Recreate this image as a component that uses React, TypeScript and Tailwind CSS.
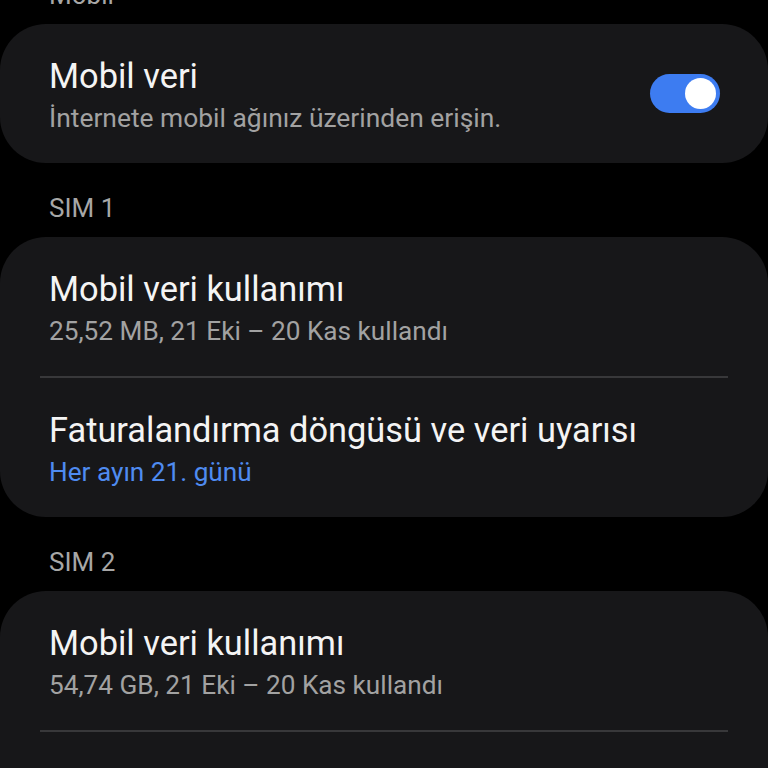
import React from 'react';

const font = { fontFamily: 'Roboto, "Noto Sans", sans-serif' };

const Header = ({ label }: { label: string }) => (
    <div className="flex h-[74px] items-end pb-[16px] pl-[49px] text-[26px] leading-none text-[#a7a7a7]">
        {label}
    </div>
);

const Row = ({ title, sub, blue }: { title: string; sub: string; blue?: boolean }) => (
    <div className="flex h-[139px] flex-col justify-center pl-[49px] pr-[40px] pt-[2px]">
        <div className="text-[34.4px] leading-[40px] text-[#f4f4f4]">{title}</div>
        <div className={`mt-[7px] text-[26.2px] leading-[30px] ${blue ? 'text-[#4f8bf0]' : 'text-[#a2a2a2]'}`}>
            {sub}
        </div>
    </div>
);

const Divider = () => <div className="mx-[40px] h-[2px] bg-[#38383a]" />;

export default function App() {
    return (
        <div className="h-[768px] w-[768px] overflow-hidden bg-black" style={font}>
            <div className="-mt-[50px]">
                <Header label="Mobil" />
                <div className="flex h-[139px] items-center justify-between rounded-[46px] bg-[#171719] pl-[49px] pr-[48px]">
                    <div className="pt-[2px]">
                        <div className="text-[34.4px] leading-[40px] text-[#f4f4f4]">Mobil veri</div>
                        <div className="mt-[7px] text-[26.4px] leading-[30px] text-[#a2a2a2]">
                            İnternete mobil ağınız üzerinden erişin.
                        </div>
                    </div>
                    <div className="flex h-[39px] w-[70px] items-center justify-end rounded-full bg-[#3d7cf1] pr-[4px]">
                        <div className="h-[31px] w-[31px] rounded-full bg-white" />
                    </div>
                </div>

                <Header label="SIM 1" />
                <div className="rounded-[46px] bg-[#171719]">
                    <Row title="Mobil veri kullanımı" sub="25,52 MB, 21 Eki – 20 Kas kullandı" />
                    <Divider />
                    <Row title="Faturalandırma döngüsü ve veri uyarısı" sub="Her ayın 21. günü" blue />
                </div>

                <Header label="SIM 2" />
                <div className="rounded-[46px] bg-[#171719]">
                    <Row title="Mobil veri kullanımı" sub="54,74 GB, 21 Eki – 20 Kas kullandı" />
                    <Divider />
                    <Row title="Faturalandırma döngüsü ve veri uyarısı" sub="Her ayın 21. günü" blue />
                </div>
            </div>
        </div>
    );
}
